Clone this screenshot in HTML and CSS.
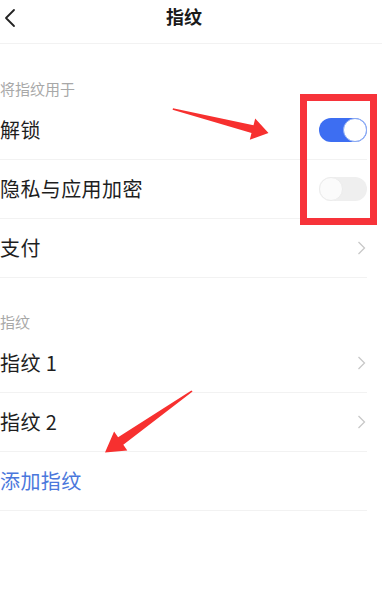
FILE: index.html
```html
<!DOCTYPE html>
<html lang="zh">
<head>
<meta charset="utf-8">
<title>指纹</title>
<link rel="stylesheet" href="styles.css">
</head>
<body>
<div class="page">
  <header class="topbar">
    <span class="back">
      <svg width="14" height="20" viewBox="0 0 14 20"><path d="M11 2 L3 10 L11 18" fill="none" stroke="#222" stroke-width="1.8" stroke-linecap="round" stroke-linejoin="round"/></svg>
    </span>
    <h1 class="title">指纹</h1>
  </header>

  <section class="group">
    <div class="group-label">将指纹用于</div>
    <div class="row"><span class="row-text">解锁</span><span class="toggle on"><span class="knob"></span></span></div>
    <div class="row"><span class="row-text">隐私与应用加密</span><span class="toggle off"><span class="knob"></span></span></div>
    <div class="row"><span class="row-text">支付</span><span class="chev"><svg width="9" height="14" viewBox="0 0 9 14"><path d="M1.5 1 L7.5 7 L1.5 13" fill="none" stroke="#c8c8c8" stroke-width="1.3"/></svg></span></div>
  </section>

  <section class="group">
    <div class="group-label">指纹</div>
    <div class="row"><span class="row-text">指纹 1</span><span class="chev"><svg width="9" height="14" viewBox="0 0 9 14"><path d="M1.5 1 L7.5 7 L1.5 13" fill="none" stroke="#c8c8c8" stroke-width="1.3"/></svg></span></div>
    <div class="row"><span class="row-text">指纹 2</span><span class="chev"><svg width="9" height="14" viewBox="0 0 9 14"><path d="M1.5 1 L7.5 7 L1.5 13" fill="none" stroke="#c8c8c8" stroke-width="1.3"/></svg></span></div>
    <div class="row"><span class="row-text add">添加指纹</span></div>
  </section>

  <div class="mark-box"></div>
  <svg class="arrows" width="382" height="616" viewBox="0 0 382 616">
    <polygon fill="#f7302f" points="173,108.3 253.5,125.2 255.2,118.4 268.5,133 249.8,139.8 251.5,133 172.6,109.8"/>
    <polygon fill="#f7302f" points="192.6,391.6 123.3,444.7 127.3,450.4 105,452.5 114.1,431.6 118.1,437.3 191.4,390.4"/>
  </svg>
</div>
</body>
</html>
```

FILE: styles.css
```css
html, body {
  margin: 0;
  padding: 0;
  background: #ffffff;
}
body {
  font-family: "Noto Sans CJK SC", "Noto Sans", sans-serif;
  color: #1e1e1e;
}
.page {
  position: relative;
  width: 382px;
  height: 616px;
  overflow: hidden;
}
.topbar {
  height: 43px;
  border-bottom: 1px solid #f2f2f2;
  display: flex;
  align-items: center;
  justify-content: center;
  position: relative;
}
.back {
  position: absolute;
  left: 3px;
  top: 8px;
  display: flex;
}
.title {
  margin: 0;
  font-size: 18px;
  font-weight: 700;
  color: #1a1a1a;
  line-height: 24px;
  margin-right: 14px;
  margin-top: -12px;
}
.group {
  display: flex;
  flex-direction: column;
}
.group-label {
  margin-top: 33px;
  height: 24px;
  line-height: 24px;
  font-size: 15px;
  color: #a8a8a8;
}
.group + .group .group-label {
  margin-top: 32px;
}
.row {
  height: 58px;
  border-bottom: 1px solid #f2f2f2;
  margin-right: 15px;
  display: flex;
  align-items: center;
  justify-content: space-between;
}
.row-text {
  font-size: 20px;
  line-height: 28px;
  color: #1e1e1e;
  letter-spacing: 0.4px;
}
.row-text.add {
  color: #4a77dc;
}
.chev {
  display: flex;
  margin-right: 1px;
}
.toggle {
  width: 48px;
  height: 24px;
  border-radius: 12px;
  position: relative;
  box-sizing: border-box;
}
.toggle.on {
  background: #3d6ef2;
}
.toggle.off {
  background: #efefef;
}
.knob {
  position: absolute;
  top: 0;
  width: 24px;
  height: 24px;
  border-radius: 50%;
  box-sizing: border-box;
  background: #ffffff;
}
.toggle.on .knob {
  right: 0;
  border: 1.5px solid #88a9f3;
}
.toggle.off .knob {
  left: 0;
  background: #fbfbfb;
  border: 1px solid #ececec;
}
.mark-box {
  position: absolute;
  left: 300px;
  top: 94px;
  width: 77px;
  height: 131px;
  box-sizing: border-box;
  border: 7.5px solid #f7333a;
}
.arrows {
  position: absolute;
  left: 0;
  top: 0;
  pointer-events: none;
}
```
